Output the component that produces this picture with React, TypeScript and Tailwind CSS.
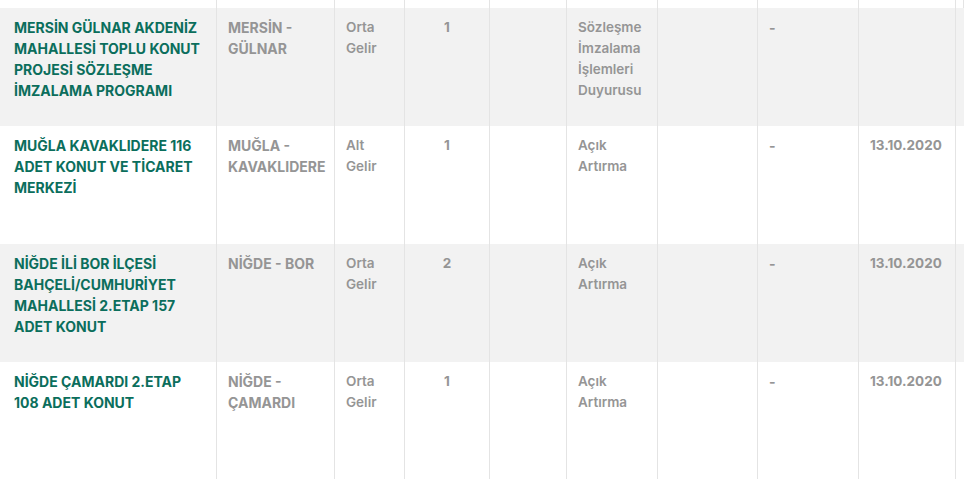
import React from "react";

type Row = {
  name: string[];
  loc: string[];
  income: string[];
  count: string;
  type: string[];
  dash: string;
  date: string;
  bg: string;
};

const rows: Row[] = [
  {
    name: ["MERSİN GÜLNAR AKDENİZ", "MAHALLESİ TOPLU KONUT", "PROJESİ SÖZLEŞME", "İMZALAMA PROGRAMI"],
    loc: ["MERSİN -", "GÜLNAR"],
    income: ["Orta", "Gelir"],
    count: "1",
    type: ["Sözleşme", "İmzalama", "İşlemleri", "Duyurusu"],
    dash: "-",
    date: "",
    bg: "bg-[#f2f2f2]",
  },
  {
    name: ["MUĞLA KAVAKLIDERE 116", "ADET KONUT VE TİCARET", "MERKEZİ"],
    loc: ["MUĞLA -", "KAVAKLIDERE"],
    income: ["Alt", "Gelir"],
    count: "1",
    type: ["Açık", "Artırma"],
    dash: "-",
    date: "13.10.2020",
    bg: "bg-white",
  },
  {
    name: ["NİĞDE İLİ BOR İLÇESİ", "BAHÇELİ/CUMHURİYET", "MAHALLESİ 2.ETAP 157", "ADET KONUT"],
    loc: ["NİĞDE - BOR"],
    income: ["Orta", "Gelir"],
    count: "2",
    type: ["Açık", "Artırma"],
    dash: "-",
    date: "13.10.2020",
    bg: "bg-[#f2f2f2]",
  },
  {
    name: ["NİĞDE ÇAMARDI 2.ETAP", "108 ADET KONUT"],
    loc: ["NİĞDE -", "ÇAMARDI"],
    income: ["Orta", "Gelir"],
    count: "1",
    type: ["Açık", "Artırma"],
    dash: "-",
    date: "13.10.2020",
    bg: "bg-white",
  },
];

const grid = "grid grid-cols-[217px_118px_70px_85px_77px_91px_100px_101px_97px_1fr]";
const cell = "border-r border-[#e4e4e4] px-[11px] pt-[9px]";

function Lines({ lines }: { lines: string[] }) {
  return (
    <>
      {lines.map((l, i) => (
        <div key={i}>{l}</div>
      ))}
    </>
  );
}

export default function App() {
  return (
    <div
      className="w-[964px] h-[479px] overflow-hidden bg-white text-[14px] leading-[21px]"
      style={{ fontFamily: "Inter, 'Noto Sans', sans-serif" }}
    >
      <div className={`${grid} h-[8px] bg-white`}>
        {Array.from({ length: 10 }).map((_, i) => (
          <div key={i} className="border-r border-[#e4e4e4]" />
        ))}
      </div>
      {rows.map((r, idx) => (
        <div key={idx} className={`${grid} h-[118px] ${r.bg}`}>
          <div className={`${cell} pl-[14px] font-bold text-[#0b6e5c]`}>
            <Lines lines={r.name} />
          </div>
          <div className={`${cell} font-bold text-[#959595]`}>
            <Lines lines={r.loc} />
          </div>
          <div className={`${cell} font-semibold text-[13.5px] text-[#959595]`}>
            <Lines lines={r.income} />
          </div>
          <div className={`${cell} font-bold text-[13.5px] text-[#959595] text-center`}>{r.count}</div>
          <div className={cell} />
          <div className={`${cell} font-semibold text-[13.5px] text-[#959595]`}>
            <Lines lines={r.type} />
          </div>
          <div className={cell} />
          <div className={`${cell} font-bold text-[#959595]`}>{r.dash}</div>
          <div className={`${cell} font-bold text-[13.5px] text-[#959595]`}>{r.date}</div>
          <div className="" />
        </div>
      ))}
    </div>
  );
}
